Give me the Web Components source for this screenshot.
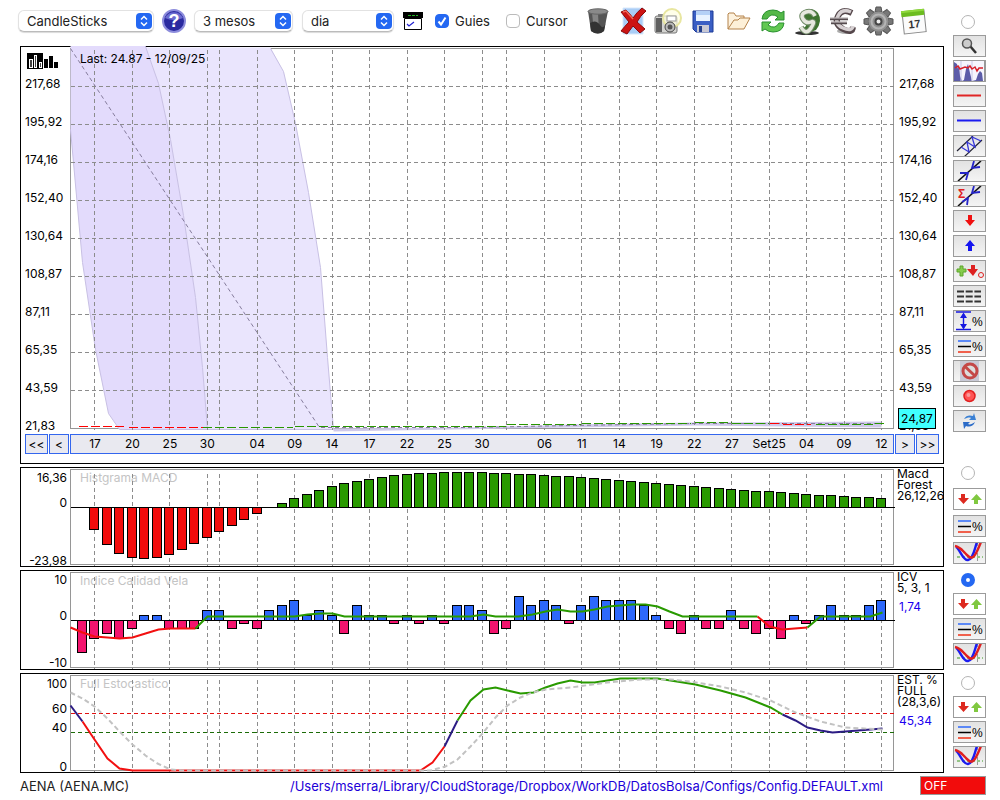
<!DOCTYPE html>
<html lang="ca">
<head>
<meta charset="utf-8">
<title>AENA (AENA.MC)</title>
<style>
  body {
    margin: 0;
    background: white;
    color: black;
    font-family: Inter, "Liberation Sans", sans-serif;
    font-size: 12px;
  }
</style>
</head>
<body>
<stock-app></stock-app>

<script>
const PITCH = 12.485;
const barX = k => Math.floor(PITCH * k);
const LABELS = [[2, '17'], [5, '20'], [8, '25'], [11, '30'], [15, '04'], [18, '09'], [21, '14'], [24, '17'], [27, '22'],
  [30, '25'], [33, '30'], [38, '06'], [41, '11'], [44, '14'], [47, '19'], [50, '22'], [53, '27'], [56, 'Set25'],
  [59, '04'], [62, '09'], [65, '12']];
const GRID = [...LABELS.map(l => l[0]), 12, 35];

// first entry is bar 2
const MACD = [-22, -37, -46, -50, -51, -50, -47, -42, -36, -30, -24, -18, -12, -6, 0, 4, 9, 13, 17, 21, 24, 26, 28, 30, 32,
  33, 34, 34, 35, 35, 35, 35, 34, 34, 33, 33, 32, 31, 31, 30, 29, 28, 27, 26, 25, 24, 23, 22, 21, 20, 19, 18, 17, 16, 16,
  15, 14, 13, 12, 12, 11, 10, 10, 9];
// first entry is bar 1
const ICV = [-32, -18, -13, -18, -8, 5, 5, -8, -8, -8, 10, 10, -8, -3, -8, 10, 15, 20, 5, 10, 5, -13, 15, 5, 5, -3, 5, -3, 5,
  -3, 15, 15, 10, -13, -8, 24, 15, 20, 15, -3, 15, 24, 20, 20, 20, 15, 5, -8, -13, 5, -8, -8, 10, -8, -13, -8, -18, 5, -3,
  5, 15, 5, 5, 15, 20];

const line = (points, color, extra = '') =>
  `<polyline points="${points}" fill="none" stroke="${color}" stroke-width="2" vector-effect="non-scaling-stroke" ${extra}/>`;

const gridLines = (top, bottom) => GRID.map(k =>
  `<path d="M${barX(k)} ${top}V${bottom}" class="grid"/>`).join('');

const bars = (values, first, zero, up, down) => values.map((v, i) => v === 0 ? '' :
  `<rect x="${barX(i + first) - 5}" y="${v > 0 ? zero - v : zero}" width="9" height="${Math.abs(v)}" fill="${v > 0 ? up : down}" stroke="black"/>`).join('');

const PERCENT = '<text x="18" y="15" font-size="12">%</text>';
const LINES = '<path d="M4 5H17" stroke="#2d68fb" stroke-width="1.5"/><path d="M4 10.500H17" stroke="black" stroke-width="1.5"/><path d="M4 16H17" stroke="#f0604c" stroke-width="2"/>';

const TOOLS = {
  zoom: '<path d="M16 10L22 17" stroke="#333" stroke-width="2.500"/><circle cx="13" cy="7.500" r="4.500" fill="#ccc" stroke="#555" stroke-width="1.500"/>',
  area: '<path d="M-1-1H32V21H-1Z" fill="#f6f5fd"/><path d="M0 20V1L3 3L4 8L5 4L6 15L8 20L10 19L12 8L14 3L16 12L18 20L22 19L24 13L26 10L28 12L29 20Z" fill="#5c5ca8"/><path d="M18 0V20M7 0V20" stroke="#c8c8e6"/><path d="M1 7L4 5L6 8L11 6L14 7L16 5L18 8L21 6L23 10L25 7L29 7" fill="none" stroke="#d8202a" stroke-width="1.500"/><path d="M30.500 0V20" stroke="#999"/>',
  red: '<path d="M3 9.500H27" stroke="#e02626" stroke-width="2"/>',
  blue: '<path d="M3 9.500H27" stroke="#1c1cf0" stroke-width="2"/>',
  channel: '<path d="M3 15L19 0M10 21L28 4" stroke="#223" stroke-width="1.200"/><path d="M7 11L15 16L13 6L21 11L18 1L27 5" fill="none" stroke="#3838d8" stroke-width="1.300"/>',
  trend: '<path d="M4 20L27 0" stroke="#111" stroke-width="1.600"/><path d="M6 12L14 12L12 19M26 6L18 7L20 0" fill="none" stroke="#2424c8" stroke-width="1.800"/>',
  sumTrend: '<path d="M4 20L27 0" stroke="#111" stroke-width="1.600"/><path d="M8 16L14 12L13 19M26 6L18 7L20 0" fill="none" stroke="#2424c8" stroke-width="1.800"/><text x="4" y="12" font-size="12" font-weight="700" fill="#e02020">Σ</text>',
  down: '<path d="M14 4H18V9H21L16 15L11 9H14Z" fill="#f01010"/>',
  up: '<path d="M14 15H18V10H21L16 4L11 10H14Z" fill="#1414f0"/>',
  mixed: '<path d="M6 5H9V8H12V11H9V15H6V11H3V8H6Z" fill="#86cc4c" stroke="#5da62c"/><path d="M17 4H21V8H24L19 15L13 8H17Z" fill="#dd2020"/><circle cx="27" cy="14" r="2.500" fill="none" stroke="#dd2020"/>',
  dashes: '<path d="M3 5.500H27M3 10.500H27M3 15.500H27" stroke="#333" stroke-width="2" stroke-dasharray="7 1.700"/>',
  range: '<path d="M2 1H17M2 18.500H17M9.500 3V17" stroke="#1818e0" stroke-width="1.400"/><path d="M6 7L9.500 1.500L13 7ZM6 13L9.500 18.500L13 13Z" fill="#1818e0"/>' + PERCENT,
  levels: LINES + PERCENT,
  forbid: '<rect x="6" y="0" width="19" height="20" fill="#c9cad6"/><circle cx="16" cy="10" r="7" fill="#ddd" stroke="#c44848" stroke-width="3"/><path d="M11 5.500L21 15" stroke="#c44848" stroke-width="3"/>',
  record: '<circle cx="15.500" cy="10" r="5.500" fill="#f55" stroke="#e02020" stroke-width="1.500"/><circle cx="14.500" cy="9" r="2" fill="#fa9a9a"/>',
  sync: '<path d="M10 8C12 4 16 4 19 5L20 2L22 9L15 9L17 7C15 6 13 7 10 8Z" fill="#3a80d4"/><path d="M21 11C19 16 15 16 12 15L10 18L9 11L16 11L14 13C16 14 18 13 21 11Z" fill="#2c6cc8"/>',
  updown: '<path d="M7 5H11V9H15L9.500 15L4 9H7Z" fill="#dd2a20"/><path d="M20 15H24V11H28L22.500 5L17 11H20Z" fill="#80c840"/>',
  curves: '<path d="M3 14H29" stroke="#3a9a20" stroke-dasharray="3 2"/><path d="M23.500 0V20" stroke="#999" stroke-dasharray="3 2"/><path d="M2 4C6 6 9 18 14 17S20 8 23-1" fill="none" stroke="#1c1cf0" stroke-width="2.400"/><path d="M1 3C6 4 8 7 11 10S16 16 19 14S24 6 27-1" fill="none" stroke="#e02020" stroke-width="2.400"/>'
};

const ICONS = {
  Elimina: '<path d="M4 4L7 24Q14 29 20 24L24 4Z" fill="#555"/><path d="M8 6L10 24Q14 26 15 26L14 6Z" fill="#858585"/><path d="M6 16Q12 12 16 18T22 14L20 24Q14 29 7 24Z" fill="#333"/><ellipse cx="14" cy="4.500" rx="10" ry="2.700" fill="#8a8a8a" stroke="#666"/>',
  Tanca: '<path d="M4 1H24V27H4Z" fill="#a9cdf6" stroke="#d8e8fb"/><path d="M2 5L7 3Q11 7 14 11Q18 5 23 1L27 4Q21 9 18 15L26 22L21 26L14 19L8 27L2 24Q6 19 10 15Z" fill="#cc1414" stroke="#8c0808"/><path d="M4 5L7 4L14 12" fill="none" stroke="#ee6a5c" stroke-width="1.500"/>',
  Captura: '<rect x="1" y="9" width="22" height="17" rx="2" fill="#d3d3d0" stroke="#777"/><rect x="2" y="11" width="6" height="14" fill="#606060"/><path d="M4 7H10V10H4Z" fill="#888"/><circle cx="18" cy="11" r="9" fill="#fffde0" fill-opacity=".7" stroke="#e8e6a0" stroke-width="2"/><rect x="13" y="9" width="9" height="5" fill="#fff" stroke="#999"/><circle cx="16" cy="20" r="5" fill="#bbb" stroke="#444"/><circle cx="16" cy="20" r="2.500" fill="#555"/>',
  Desa: '<path d="M4 4H24V25H7L4 22Z" fill="#3a5ec4" stroke="#1c3a96"/><path d="M7 4H21V14H7Z" fill="#e8f2ff"/><path d="M7 4H21V8H7Z" fill="#b4d0f6"/><path d="M8 18H20V25H8Z" fill="#c8c8d4"/><path d="M10 19H13V25H10Z" fill="#25408c"/>',
  Obre: '<path d="M4 22V7L5 6H10L12 9H20V13" fill="#fdf2de" stroke="#b4824a"/><path d="M4 22L10 13H14L16 11H26L20 22Z" fill="#fdf0d8" stroke="#b4824a"/>',
  Actualitza: '<path d="M3 12Q4 3 14 3Q19 3 22 6L25 4V13H16L19 10Q12 5 8 12Z" fill="#54b848" stroke="#2a9030"/><path d="M25 16Q24 25 14 25Q9 25 6 22L3 24V15H12L9 18Q16 23 20 16Z" fill="#62c852" stroke="#2a9030"/>',
  Dolar: '<ellipse cx="13" cy="26" rx="12" ry="2" fill="#333"/><path d="M9 4Q18-1 24 6Q29 14 22 23Q14 27 7 23L12 19Z" fill="#3f7430"/><path d="M21 9Q18 3 12 5T9 12T17 15T17 21T7 20" fill="none" stroke="#6f8a66" stroke-width="5.500"/><path d="M21 9Q18 3 12 5T9 12T17 15T17 21T7 20" fill="none" stroke="#e6e8de" stroke-width="3.500"/>',
  Euro: '<ellipse cx="17" cy="24" rx="9" ry="3" fill="#aaa"/><path d="M23 6Q13 1 9 9T14 22T24 20" fill="none" stroke="#55474b" stroke-width="6"/><path d="M22 5Q13 1 9 9T14 21T24 19" fill="none" stroke="#d6d0d2" stroke-width="3.500"/><path d="M1 12H19M2 16H18" stroke="#554b4e" stroke-width="2.500"/><path d="M1 11H19M2 15H18" stroke="#d6d0d2"/>',
  Configura: '<g fill="#777" stroke="#555"><path d="M12 0H17L18 5H11ZM12 28H17L18 23H11ZM0 12V17L5 18V11ZM29 12V17L24 18V11Z"/><path transform="rotate(45 14.500 14.500)" d="M12 0H17L18 5H11ZM12 28H17L18 23H11ZM0 12V17L5 18V11ZM29 12V17L24 18V11Z"/></g><circle cx="14.500" cy="14.500" r="10" fill="#909090"/><circle cx="14.500" cy="14.500" r="7" fill="none" stroke="#b4b4b4" stroke-width="2"/><circle cx="14.500" cy="14.500" r="3" fill="#eee" stroke="#444" stroke-width="2"/>',
  Calendari: '<g transform="rotate(-6 14 14)"><rect x="4" y="4" width="22" height="22" fill="#fbfbfb" stroke="#888"/><path d="M3 3H26V9H3Z" fill="#6cbc20"/><path d="M3 3H26V5H3Z" fill="#8ed83c"/><text x="15" y="21" font-size="11" font-weight="600" text-anchor="middle" fill="#333">17</text></g>'
};

class PopSelect extends HTMLElement {
  connectedCallback() {
    this.attachShadow({ mode: 'open' });
    this.shadowRoot.innerHTML = `
      <style>
        :host { display: block; position: relative; height: 22px; }
        select {
          appearance: none;
          width: 100%;
          height: 22px;
          padding: 0 24px 0 8px;
          border: 1px solid #e2e2e2;
          border-bottom-color: #bbb;
          border-radius: 6px;
          background: white;
          box-shadow: 0 1px 1px rgba(0,0,0,0.15);
          font: 13px/20px Inter, sans-serif;
          color: #222;
        }
        svg { position: absolute; right: 2px; top: 3px; pointer-events: none; }
      </style>
      <select aria-label="${this.getAttribute('label')}"><option>${this.getAttribute('value')}</option></select>
      <svg width="16" height="16"><rect width="16" height="16" rx="4" fill="#2468f2"/>
        <path d="M5 6.500L8 3.500L11 6.500M5 9.500L8 12.500L11 9.500" fill="none" stroke="white" stroke-width="1.500"/></svg>
    `;
  }
}
customElements.define('pop-select', PopSelect);

class TickBox extends HTMLElement {
  connectedCallback() {
    this.attachShadow({ mode: 'open' });
    this.shadowRoot.innerHTML = `
      <style>
        :host { display: block; }
        label { display: flex; align-items: center; gap: 6px; font-size: 13px; color: #222; }
        input {
          appearance: none;
          width: 14px;
          height: 14px;
          margin: 0;
          border: 1px solid #bbb;
          border-radius: 4px;
          background: white;
        }
        input:checked { border-color: #2468f2; background: #2468f2; }
        span { position: relative; display: flex; }
        svg { position: absolute; left: 0; top: 0; pointer-events: none; }
      </style>
      <label>
        <span>
          <input type="checkbox" ${this.hasAttribute('checked') ? 'checked' : ''}>
          <svg width="14" height="14"><path d="M3.500 7.500L6 10.500L10.500 3.500" fill="none" stroke="white" stroke-width="2"/></svg>
        </span>
        <slot></slot>
      </label>
    `;
  }
}
customElements.define('tick-box', TickBox);

class IconButton extends HTMLElement {
  connectedCallback() {
    const icon = this.getAttribute('icon');
    this.attachShadow({ mode: 'open' });
    this.shadowRoot.innerHTML = `
      <style>
        :host { display: block; }
        button { display: block; padding: 0; border: 0; background: none; }
        svg { display: block; overflow: visible; }
      </style>
      <button aria-label="${icon}"><svg width="29" height="29">${ICONS[icon]}</svg></button>
    `;
  }
}
customElements.define('icon-button', IconButton);

class AppToolbar extends HTMLElement {
  connectedCallback() {
    this.attachShadow({ mode: 'open' });
    this.shadowRoot.innerHTML = `
      <style>
        :host { display: flex; align-items: center; height: 46px; padding-bottom: 4px; box-sizing: border-box; }
        .group { display: flex; align-items: center; gap: 9px; margin-left: -2px; }
        .checks { display: flex; gap: 16px; margin-left: 12px; }
        .icons { display: flex; gap: 6px; margin-left: 16px; }
        .wide { width: 136px; }
        .mid { width: 99px; }
        .narrow { width: 92px; }
        button { display: block; padding: 0; border: 0; background: none; }
        svg { display: block; overflow: visible; }
      </style>
      <div class="group">
        <pop-select class="wide" label="Tipus" value="CandleSticks"></pop-select>
        <button aria-label="Ajuda"><svg width="22" height="22">
          <circle cx="11" cy="11" r="11" fill="#2a2aa0" stroke="#8c8cdc" stroke-width="2"/>
          <path d="M2 8A10 10 0 0 1 20 8Q11 12 2 8Z" fill="#6c6cd0"/>
          <text x="11" y="17" font-size="18" font-weight="700" text-anchor="middle" fill="white">?</text>
        </svg></button>
        <pop-select class="mid" label="Rang" value="3 mesos"></pop-select>
        <pop-select class="narrow" label="Periode" value="dia"></pop-select>
        <button aria-label="Indicadors"><svg width="20" height="19">
          <path d="M0 0H20V6H0Z" fill="black"/><path d="M5 3.500H15" stroke="#20b020" stroke-dasharray="3 1"/>
          <path d="M1.500 6.500H18.500V17.500H1.500Z" fill="white" stroke="black"/>
          <path d="M4 12L6 14L11 10" fill="none" stroke="#2020d0" stroke-width="1.200"/>
        </svg></button>
      </div>
      <div class="checks">
        <tick-box checked>Guies</tick-box>
        <tick-box>Cursor</tick-box>
      </div>
      <div class="icons">${Object.keys(ICONS).map(i => `<icon-button icon="${i}"></icon-button>`).join('')}</div>
    `;
  }
}
customElements.define('app-toolbar', AppToolbar);

const PLOT_STYLE = `
  svg.plot { display: block; width: 100%; overflow: visible; }
  .grid { stroke: #8c8c8c; stroke-dasharray: 4 3; fill: none; shape-rendering: crispEdges; }
  .frame { stroke: #969696; fill: none; shape-rendering: crispEdges; }
  .crisp { shape-rendering: crispEdges; }
`;

class DateAxis extends HTMLElement {
  connectedCallback() {
    this.attachShadow({ mode: 'open' });
    this.shadowRoot.innerHTML = `
      <style>
        :host { display: grid; grid-template-columns: 49px minmax(0, 1fr) 49px; height: 20px; }
        div { display: flex; gap: 1px; }
        .left { padding-left: 4px; }
        .right { padding-left: 1px; }
        button {
          width: 23px;
          height: 20px;
          padding: 0;
          border: 1px solid #3366ee;
          background: #e9e9f0;
          font: inherit;
          color: black;
        }
        .one { width: 20px; }
        ol {
          display: grid;
          grid-template-columns: repeat(66, minmax(0, 1fr));
          margin: 0;
          padding: 0;
          list-style: none;
          line-height: 20px;
          background: #e9e9f0;
          box-shadow: inset 0 0 0 1px #3366ee;
        }
        li { display: flex; justify-content: center; white-space: nowrap; }
      </style>
      <div class="left"><button>&lt;&lt;</button><button class="one">&lt;</button></div>
      <ol>${LABELS.map(([k, t]) => `<li style="grid-column: ${k} / span 2">${t}</li>`).join('')}</ol>
      <div class="right"><button class="one">&gt;</button><button>&gt;&gt;</button></div>
    `;
  }
}
customElements.define('date-axis', DateAxis);

class PricePanel extends HTMLElement {
  connectedCallback() {
    const prices = ['217,68', '195,92', '174,16', '152,40', '130,64', '108,87', '87,11', '65,35', '43,59', '21,83'];
    const scale = prices.map(p => `<li>${p}</li>`).join('');
    this.attachShadow({ mode: 'open' });
    this.shadowRoot.innerHTML = `
      <style>
        :host { display: block; border: 1px solid black; padding-bottom: 9px; }
        .row { display: grid; grid-template-columns: 49px minmax(0, 1fr) 49px; height: 387px; }
        .side, .area { position: relative; }
        ol {
          display: grid;
          grid-template-rows: repeat(10, 38px);
          margin: 0;
          padding: 18px 0 0 4px;
          list-style: none;
          line-height: 38px;
        }
        .right ol { padding-left: 5px; }
        .mark { position: absolute; left: 6px; top: 6px; }
        .last { position: absolute; left: 10px; top: 4px; line-height: 16px; }
        .now {
          position: absolute;
          left: 4px;
          top: 361px;
          padding: 0 2px;
          border: 1px solid black;
          background: #40ffff;
          line-height: 19px;
        }
        ${PLOT_STYLE}
      </style>
      <div class="row">
        <div class="side">
          <svg class="mark" width="32" height="16" shape-rendering="crispEdges">
            <path d="M0 0H16V16H0Z"/>
            <path d="M2.500 6.500H5.500V14.500H2.500ZM7.500 2.500H9.500V14.500H7.500ZM12.500 9.500H14.500V14.500H12.500Z" fill="#444" stroke="white"/>
            <path d="M17 6H21V15H17ZM22 3H26V15H22ZM27 9H31V15H27Z"/>
          </svg>
          <ol>${scale}</ol>
        </div>
        <div class="area">
          <svg class="plot" height="387" viewBox="-0.5 -0.5 824 387" preserveAspectRatio="none">
            <path class="frame" d="M0 1H823V381H0Z"/>
            <polygon points="0,-1.500 75,-1.500 88,36 100,92 113,168 125,250 132,320 137,382 49,382 38,366 25,302 12,215 0,82" fill="#e3dbfc"/>
            <polygon points="75,0 200,0 213,24 225,76 238,145 250,220 257,310 263,382 137,382 132,320 125,250 113,168 100,92 88,36" fill="#eae5fd"/>
            <polygon points="263,381 400,380 500,377 624,375 811,374 811,380 624,378 500,380 263,384" fill="#cfc9ea"/>
            <polyline points="75,-1 88,36 100,92 113,168 125,250 132,320 137,382" fill="none" stroke="#c8c0e4"/>
            <polyline points="200,1 213,24 225,76 238,145 250,220 257,310 263,382" fill="none" stroke="#c8c0e4"/>
            <polyline points="0,82 12,215 25,302 38,366 49,382 263,382" fill="none" stroke="#c8c0e4"/>
            ${gridLines(2, 382)}
            ${[39, 77, 115, 153, 191, 229, 267, 305, 343].map(y => `<path class="grid" d="M0 ${y}H823"/>`).join('')}
            <path d="M0 1L249 380H400L500 378L624 376H811" fill="none" stroke="#857c9c" stroke-dasharray="4 3"/>
            <g class="crisp" fill="none" stroke-dasharray="9 3">
              <path d="M8 379H53M58 380H132" stroke="red"/>
              <path d="M132 380H222M224 379H435M436 377H510M511 376H620M624 375H661M661 376H698" stroke="#289600"/>
              <path d="M699 376H712M712 377H740" stroke="red"/>
              <path d="M745 377H804M804 376H814" stroke="#289600"/>
            </g>
          </svg>
          <span class="last">Last: 24.87 - 12/09/25</span>
        </div>
        <div class="side right"><ol>${scale}</ol><span class="now">24,87</span></div>
      </div>
      <date-axis></date-axis>
    `;
  }
}
customElements.define('price-panel', PricePanel);

const PLOTS = {
  macd: `
    ${bars(MACD, 2, 39, '#299a00', '#f20c0c')}
    <path d="M0 39H824" stroke="black"/>`,
  icv: `
    ${bars(ICV, 1, 49, '#2d68fb', '#f3146e')}
    <path d="M0 49H824" stroke="black"/>
    <g shape-rendering="auto">
      ${line('0,56 12,61 24,65 37,66 49,67 62,66 75,62 88,58 100,57 125,57', '#f21010')}
      ${line('125,57 137,45 224,45 237,43 250,42 262,42 274,45 400,45 413,43 425,45 448,45 462,43 475,40 487,38 500,40 512,40 524,38 537,35 550,34 562,33 575,33 587,35 599,40 612,45 687,45', '#299a00')}
      ${line('687,45 699,55 712,58 724,57 737,56', '#f21010')}
      ${line('737,56 750,45 800,45 812,41', '#299a00')}
    </g>`,
  stoch: `
    <path d="M0 39H824" stroke="#e01010" stroke-dasharray="4 3"/>
    <path d="M0 58H824" stroke="#1c6c08" stroke-dasharray="4 3"/>
    <g shape-rendering="auto">
      ${line('0,31 12,47', '#2c1c84')}
      ${line('12,47 24,65 37,84 49,94 62,96 350,96 362,88 374,72', '#f21010')}
      ${line('374,72 387,46', '#2c1c84')}
      ${line('387,46 400,26 413,15 425,13 437,16 450,19 463,18 475,13 487,9 500,6 512,8 524,8 537,6 550,4 562,4 587,4 600,6 625,10 650,16 675,23 700,33 712,40', '#299a00')}
      ${line('712,40 725,46 737,53 750,56 762,58 775,57 800,55 812,54', '#2c1c84')}
      ${line('0,18 12,24 24,32 37,44 49,57 62,70 75,81 87,89 100,95 112,96 360,96 375,92 387,85 400,72 412,59 425,43 437,31 450,23 462,18 475,15 500,13 537,8 570,5 600,5 620,7 650,12 675,18 700,26 725,38 750,47 775,53 812,55', '#c2c2c2', 'stroke-dasharray="5 3"')}
    </g>`
};

class IndicatorPanel extends HTMLElement {
  connectedCallback() {
    const attr = name => this.getAttribute(name);
    const rows = attr('rows').split(' ').map(r => r + 'px').join(' ');
    this.attachShadow({ mode: 'open' });
    this.shadowRoot.innerHTML = `
      <style>
        :host {
          display: grid;
          grid-template-columns: 49px minmax(0, 1fr) 49px;
          height: 98px;
          border: 1px solid black;
        }
        ol {
          display: grid;
          align-items: end;
          margin: 0;
          padding: 0 3px 0 0;
          list-style: none;
          line-height: 10px;
          text-align: right;
        }
        .area { position: relative; }
        .title { position: absolute; left: 10px; top: 3px; line-height: 14px; color: #c4c4c4; z-index: -1; }
        .info { overflow: hidden; padding-left: 3px; line-height: 11px; white-space: nowrap; }
        .value { margin-top: 8px; padding-left: 2px; color: #1c00f0; line-height: 12px; }
        ${PLOT_STYLE}
      </style>
      <ol style="grid-template-rows: ${rows}">${attr('scale').split(' ').map(s => `<li>${s}</li>`).join('')}</ol>
      <div class="area">
        <svg class="plot" height="98" viewBox="-0.5 -0.5 824 98" preserveAspectRatio="none">
          <path class="frame" d="M0 1H823V96H0Z"/>
          ${gridLines(5, 97)}
          <g class="crisp">${PLOTS[attr('plot')]}</g>
        </svg>
        <span class="title">${attr('label')}</span>
      </div>
      <div class="info">
        <slot></slot>
        ${attr('value') ? `<div class="value">${attr('value')}</div>` : ''}
      </div>
    `;
  }
}
customElements.define('indicator-panel', IndicatorPanel);

class SideRail extends HTMLElement {
  connectedCallback() {
    const groups = [
      ['zoom', 'area', 'red', 'blue', 'channel', 'trend', 'sumTrend', 'down', 'up', 'mixed', 'dashes', 'range', 'levels', 'forbid', 'record', 'sync'],
      ['updown', 'levels', 'curves'],
      ['updown', 'levels', 'curves'],
      ['updown', 'levels', 'curves']
    ];
    this.attachShadow({ mode: 'open' });
    this.shadowRoot.innerHTML = `
      <style>
        :host { display: grid; grid-template-rows: 451px 107px 103px auto; width: 33px; padding-top: 15px; }
        .group { display: flex; flex-direction: column; align-items: center; gap: 3px; }
        .group:nth-of-type(2) { gap: 5px; }
        input {
          appearance: none;
          width: 14px;
          height: 14px;
          margin: 0 3px 3px 0;
          border: 1px solid #b4b4b4;
          border-radius: 50%;
          background: white;
        }
        input:checked { border: 5px solid #2468f2; }
        button {
          box-sizing: border-box;
          width: 33px;
          height: 22px;
          padding: 0;
          border: 1px solid #9b9b9b;
          background: linear-gradient(#e2e2e2, #f4f4f4);
        }
        .updown { background: white; }
        svg { display: block; font-family: "Liberation Sans", sans-serif; }
      </style>
      ${groups.map((g, i) => `
        <div class="group">
          <input type="radio" name="panel" aria-label="Panell ${i + 1}" ${i === 2 ? 'checked' : ''}>
          ${g.map(t => `<button class="${t}" aria-label="${t}"><svg width="31" height="20">${TOOLS[t]}</svg></button>`).join('')}
        </div>`).join('')}
    `;
  }
}
customElements.define('side-rail', SideRail);

class StatusBar extends HTMLElement {
  connectedCallback() {
    this.attachShadow({ mode: 'open' });
    this.shadowRoot.innerHTML = `
      <style>
        :host { display: flex; align-items: center; height: 25px; padding: 0 14px 0 20px; font-size: 13px; }
        .name { flex: 1; color: #222; }
        .path { color: #1c00d8; margin-right: 37px; }
        button {
          width: 66px;
          height: 19px;
          padding: 0 3px;
          border: 1px solid #999;
          background: #f20c0c;
          color: white;
          font: inherit;
          font-size: 12px;
          line-height: 16px;
          text-align: left;
        }
      </style>
      <span class="name">AENA (AENA.MC)</span>
      <span class="path">/Users/mserra/Library/CloudStorage/Dropbox/WorkDB/DatosBolsa/Configs/Config.DEFAULT.xml</span>
      <button>OFF</button>
    `;
  }
}
customElements.define('status-bar', StatusBar);

class StockApp extends HTMLElement {
  connectedCallback() {
    this.attachShadow({ mode: 'open' });
    this.shadowRoot.innerHTML = `
      <style>
        :host { display: block; }
        main { display: flex; gap: 9px; padding: 0 14px 0 20px; }
        .charts { flex: 1; min-width: 0; }
        .panels { display: flex; flex-direction: column; gap: 3px; }
      </style>
      <main>
        <div class="charts">
          <app-toolbar></app-toolbar>
          <div class="panels">
            <price-panel></price-panel>
            <indicator-panel plot="macd" label="Histgrama MACD" rows="15 25 58" scale="16,36 0 -23,98">Macd<br>Forest<br>26,12,26</indicator-panel>
            <indicator-panel plot="icv" label="Indice Calidad Vela" rows="14 36 47" scale="10 0 -10" value="1,74">ICV<br>5, 3, 1</indicator-panel>
            <indicator-panel plot="stoch" label="Full Estocastico" rows="15 25 19 39" scale="100 60 40 0" value="45,34">EST. %<br>FULL<br>(28,3,6)</indicator-panel>
          </div>
        </div>
        <side-rail></side-rail>
      </main>
      <status-bar></status-bar>
    `;
  }
}
customElements.define('stock-app', StockApp);
</script>
</body>
</html>
